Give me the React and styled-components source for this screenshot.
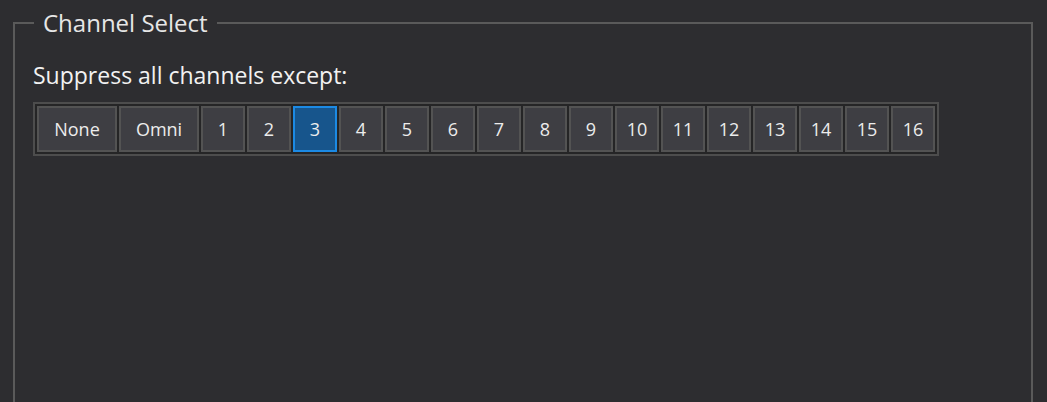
import React, { useState } from 'react';
import styled, { createGlobalStyle } from 'styled-components';

const GlobalStyle = createGlobalStyle`
  html, body {
    margin: 0;
    padding: 0;
    height: 402px;
    overflow: hidden;
    background: #2d2d30;
  }
`;

const Page = styled.div`
  box-sizing: border-box;
  height: 402px;
  overflow: hidden;
  padding: 8px 14px 0 13px;
  font-family: "Open Sans", "Noto Sans", sans-serif;
`;

// bottom border sits below the window edge, as in the original
const Group = styled.fieldset`
  margin: 0;
  padding: 0 18px;
  height: 420px;
  border: 2px solid #5a5a5a;
  min-width: 0;
`;

const Legend = styled.legend`
  padding: 0 9px;
  margin-left: 1px;
  font-size: 24px;
  line-height: 30px;
  color: #e6e6e6;
`;

const Label = styled.div`
  margin-top: 22px;
  font-size: 23px;
  line-height: 30px;
  color: #f2f2f2;
`;

const Strip = styled.div`
  display: inline-flex;
  gap: 2px;
  margin-top: 12px;
  padding: 2px;
  border: 2px solid #4d4d4d;
  background: #252526;
`;

const ChannelButton = styled.button`
  box-sizing: border-box;
  width: ${p => (p.$wide ? '80px' : '44px')};
  height: 46px;
  padding: 0;
  border: 2px solid ${p => (p.$active ? '#1c8ae4' : '#535353')};
  background: ${p => (p.$active ? '#17558c' : '#3e3e43')};
  color: #ececec;
  font-family: "Open Sans", "Noto Sans", sans-serif;
  font-size: 18px;
  cursor: pointer;
`;

const channels = ['None', 'Omni', ...Array.from({ length: 16 }, (_, i) => String(i + 1))];

export default function App() {
  const [selected, setSelected] = useState('3');
  return (
    <>
      <GlobalStyle />
      <Page>
        <Group>
          <Legend>Channel Select</Legend>
          <Label>Suppress all channels except:</Label>
          <Strip>
            {channels.map(c => (
              <ChannelButton
                key={c}
                $wide={c === 'None' || c === 'Omni'}
                $active={selected === c}
                onClick={() => setSelected(c)}
              >
                {c}
              </ChannelButton>
            ))}
          </Strip>
        </Group>
      </Page>
    </>
  );
}
